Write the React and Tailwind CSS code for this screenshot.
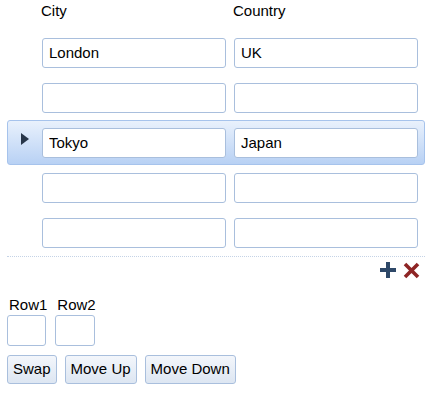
const ROWS = [
  { city: "London", country: "UK" },
  { city: "", country: "" },
  { city: "Tokyo", country: "Japan", selected: true },
  { city: "", country: "" },
  { city: "", country: "" },
];

const inputCls =
  "h-[30px] w-[184px] rounded-[3px] border border-[#a9bfdd] bg-white px-[6px] text-[15px] text-black outline-none";

function Row({ row }) {
  return (
    <div
      className={
        "flex h-[45px] items-center rounded-[3px] border " +
        (row.selected
          ? "border-[#a6c3ec] bg-gradient-to-b from-[#e9f1fc] to-[#b8d1f4]"
          : "border-transparent")
      }
    >
      <div className="flex w-[34px] justify-center">
        {row.selected && (
          <svg width="8" height="12" viewBox="0 0 8 12" className="-ml-[1px] -mt-[8px] shrink-0">
            <path d="M0 0 L8 6 L0 12 Z" fill="#27364a" />
          </svg>
        )}
      </div>
      <div className="flex gap-[8px]">
        <input className={inputCls} defaultValue={row.city} />
        <input className={inputCls} defaultValue={row.country} />
      </div>
    </div>
  );
}

function Btn({ children }) {
  return (
    <button className="h-[29px] rounded-[3px] border border-[#a9bfdd] bg-gradient-to-b from-[#f3f6fb] to-[#dde6f2] px-[5px] text-[15px] text-black">
      {children}
    </button>
  );
}

export default function App() {
  return (
    <div className="h-[395px] w-[434px] bg-white pl-[7px] pr-[9px] text-black font-['Liberation_Sans',Arial,sans-serif]">
      {/* Header */}
      <div className="flex h-[30px] text-[15px]">
        <span className="ml-[34px] w-[192px]">City</span>
        <span>Country</span>
      </div>

      {/* Grid rows */}
      <div className="flex flex-col">
        {ROWS.map((r, i) => (
          <Row key={i} row={r} />
        ))}
      </div>

      <div className="mt-[1px] border-t border-dotted border-[#c5d3e6]" />

      {/* Add / remove */}
      <div className="flex h-[26px] items-center justify-end gap-[7px] pr-[5px]">
        <svg width="16" height="16" viewBox="0 0 16 16">
          <path d="M6 0 H10 V6 H16 V10 H10 V16 H6 V10 H0 V6 H6 Z" fill="#2e4868" />
        </svg>
        <svg width="17" height="17" viewBox="0 0 17 17">
          <path d="M2 2 L15 15 M15 2 L2 15" stroke="#8e2525" strokeWidth="3.6" strokeLinecap="butt" />
        </svg>
      </div>

      {/* Swap controls */}
      <div className="mt-[12px] flex gap-[8px] text-[15px]">
        <label className="flex flex-col">
          <span className="pl-[2px] leading-[19px]">Row1</span>
          <input className="mt-[1px] h-[31px] w-[39px] rounded-[3px] border border-[#a9bfdd] outline-none" />
        </label>
        <label className="flex flex-col">
          <span className="pl-[2px] leading-[19px]">Row2</span>
          <input className="mt-[1px] h-[31px] w-[40px] rounded-[3px] border border-[#a9bfdd] outline-none" />
        </label>
      </div>

      <div className="mt-[9px] flex gap-[8px]">
        <Btn>Swap</Btn>
        <Btn>Move Up</Btn>
        <Btn>Move Down</Btn>
      </div>
    </div>
  );
}
